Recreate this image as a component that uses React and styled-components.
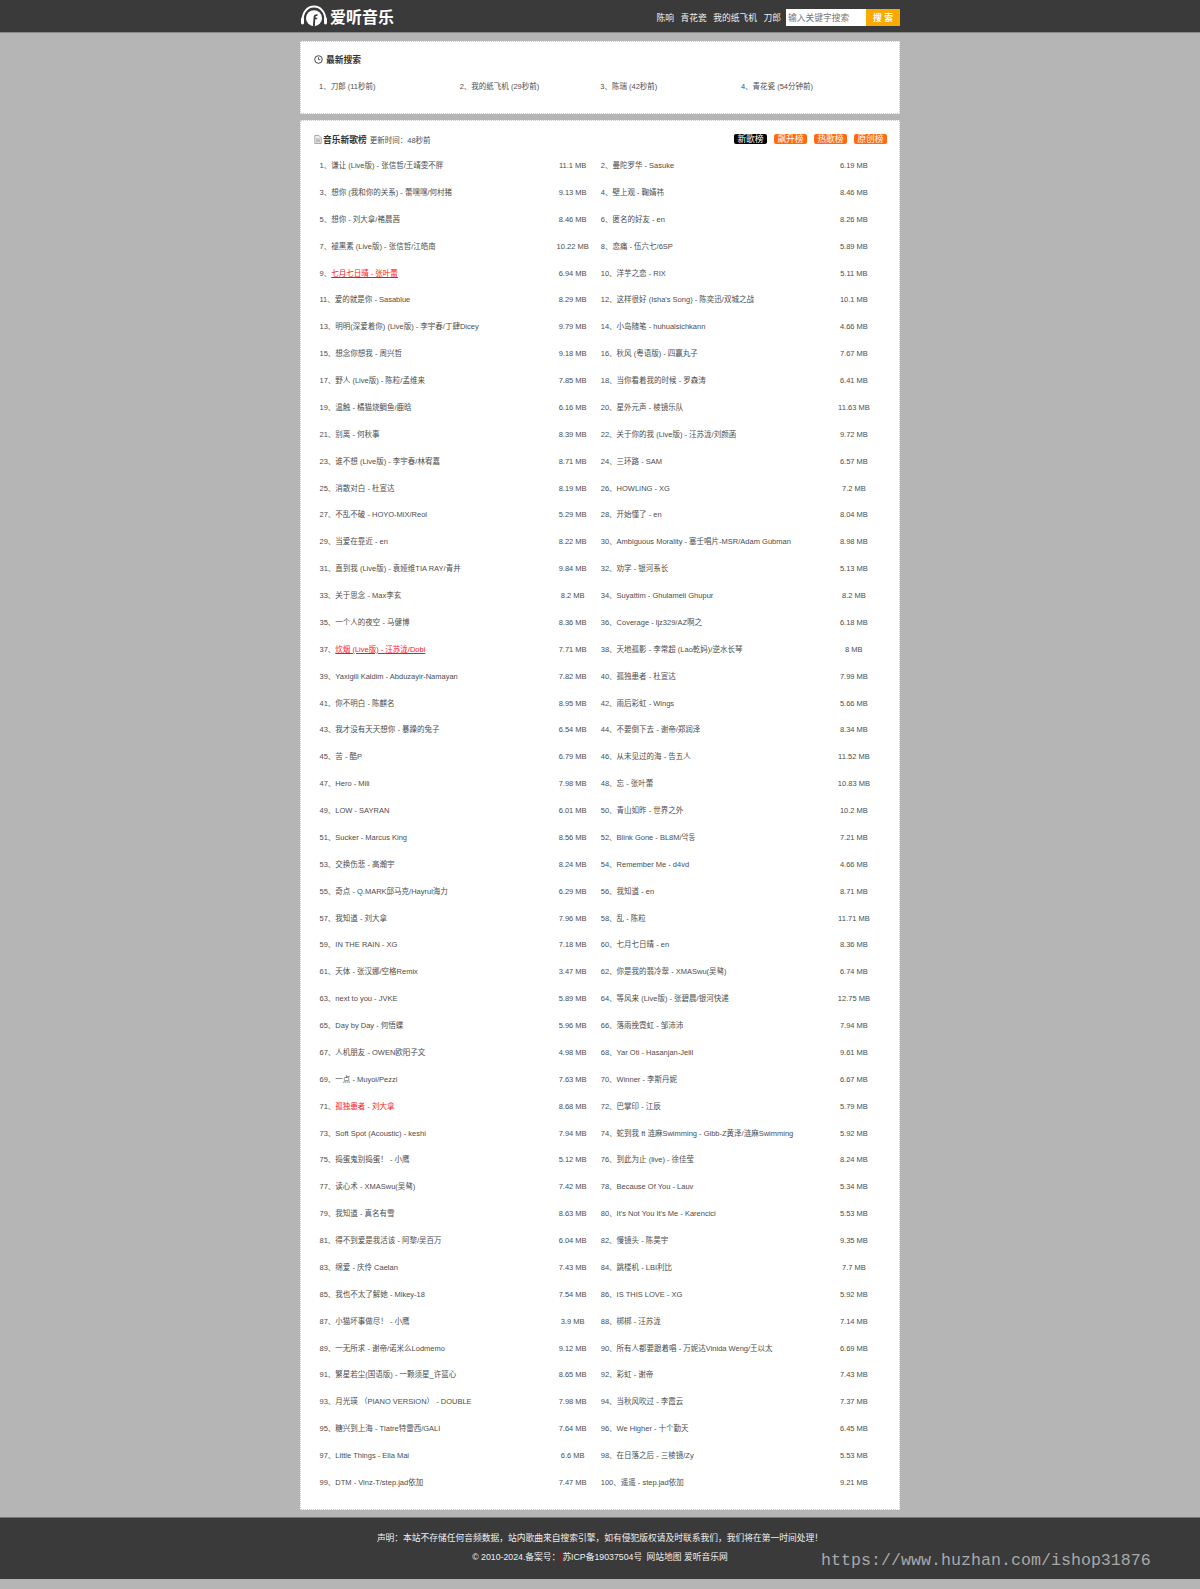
import React from "react";
import styled, { createGlobalStyle } from "styled-components";

const GlobalStyle = createGlobalStyle`
  * {
    box-sizing: border-box;
  }
  body {
    margin: 0;
    background: #b5b5b5;
    font-family: "Liberation Sans", "Noto Sans CJK SC", sans-serif;
    font-size: 7.5px;
    color: #4d4d4d;
  }
  a {
    color: inherit;
    text-decoration: none;
  }
`;

const navLinks = ["陈响", "青花瓷", "我的纸飞机", "刀郎"];

const recent = ["刀郎 (11秒前)", "我的纸飞机 (29秒前)", "陈瑞 (42秒前)", "青花瓷 (54分钟前)"];

const tabs = [
  { label: "新歌榜", active: true },
  { label: "飙升榜" },
  { label: "热歌榜" },
  { label: "原创榜" },
];

// [song, size, highlight] highlight: 1 = red + underline, 2 = red only
const songs = [
  ["谦让 (Live版) - 张信哲/王靖雯不胖", "11.1 MB"],
  ["曼陀罗华 - Sasuke", "6.19 MB"],
  ["想你 (我和你的关系) - 蕾嘿嘿/何村猪", "9.13 MB"],
  ["壁上观 - 鞠婧祎", "8.46 MB"],
  ["想你 - 刘大拿/褚晨茜", "8.46 MB"],
  ["匿名的好友 - en", "8.26 MB"],
  ["褪黑素 (Live版) - 张信哲/江皓南", "10.22 MB"],
  ["恋痛 - 伍六七/6SP", "5.89 MB"],
  ["七月七日晴 - 张叶蕾", "6.94 MB", 1],
  ["洋芋之恋 - RIX", "5.11 MB"],
  ["爱的就是你 - Sasablue", "8.29 MB"],
  ["这样很好 (Isha's Song) - 陈奕迅/双城之战", "10.1 MB"],
  ["明明(深爱着你) (Live版) - 李宇春/丁肆Dicey", "9.79 MB"],
  ["小岛随笔 - huhualsichkann", "4.66 MB"],
  ["想念你想我 - 周兴哲", "9.18 MB"],
  ["秋风 (粤语版) - 四赢丸子", "7.67 MB"],
  ["野人 (Live版) - 陈粒/孟维来", "7.85 MB"],
  ["当你看着我的时候 - 罗森涛", "6.41 MB"],
  ["温触 - 橘猫烧鲷鱼/鹿晗", "6.16 MB"],
  ["星外元声 - 棱镜乐队", "11.63 MB"],
  ["别离 - 何秋事", "8.39 MB"],
  ["关于你的我 (Live版) - 汪苏泷/刘颜菡", "9.72 MB"],
  ["谁不想 (Live版) - 李宇春/林宥嘉", "8.71 MB"],
  ["三环路 - SAM", "6.57 MB"],
  ["消散对白 - 杜宣达", "8.19 MB"],
  ["HOWLING - XG", "7.2 MB"],
  ["不乱不破 - HOYO-MiX/Reol", "5.29 MB"],
  ["开始懂了 - en", "8.04 MB"],
  ["当爱在靠近 - en", "8.22 MB"],
  ["Ambiguous Morality - 塞壬唱片-MSR/Adam Gubman", "8.98 MB"],
  ["直到我 (Live版) - 袁娅维TIA RAY/青井", "9.84 MB"],
  ["劝学 - 银河系长", "5.13 MB"],
  ["关于思念 - Max李玄", "8.2 MB"],
  ["Suyattim - Ghulameli Ghupur", "8.2 MB"],
  ["一个人的夜空 - 马健博", "8.36 MB"],
  ["Coverage - ljz329/AZ啊之", "6.18 MB"],
  ["炊烟 (Live版) - 汪苏泷/Dobi", "7.71 MB", 1],
  ["天地孤影 - 李常超 (Lao乾妈)/逆水长琴", "8 MB"],
  ["Yaxigili Kaldim - Abduzayir-Namayan", "7.82 MB"],
  ["孤独患者 - 杜宣达", "7.99 MB"],
  ["你不明白 - 陈麒名", "8.95 MB"],
  ["雨后彩虹 - Wings", "5.66 MB"],
  ["我才没有天天想你 - 暴躁的兔子", "6.54 MB"],
  ["不要倒下去 - 谢帝/郑润泽", "8.34 MB"],
  ["苦 - 酷P", "6.79 MB"],
  ["从未见过的海 - 告五人", "11.52 MB"],
  ["Hero - Mili", "7.98 MB"],
  ["忘 - 张叶蕾", "10.83 MB"],
  ["LOW - SAYRAN", "6.01 MB"],
  ["青山如昨 - 世界之外", "10.2 MB"],
  ["Sucker - Marcus King", "8.56 MB"],
  ["Blink Gone - BL8M/악동", "7.21 MB"],
  ["交换伤悲 - 高瀚宇", "8.24 MB"],
  ["Remember Me - d4vd", "4.66 MB"],
  ["奇点 - Q.MARK邱马克/Hayrul海力", "6.29 MB"],
  ["我知道 - en", "8.71 MB"],
  ["我知道 - 刘大拿", "7.96 MB"],
  ["乱 - 陈粒", "11.71 MB"],
  ["IN THE RAIN - XG", "7.18 MB"],
  ["七月七日晴 - en", "8.36 MB"],
  ["天体 - 张汉娜/空格Remix", "3.47 MB"],
  ["你是我的翡冷翠 - XMASwu(吴骜)", "6.74 MB"],
  ["next to you - JVKE", "5.89 MB"],
  ["等风来 (Live版) - 张碧晨/银河快递", "12.75 MB"],
  ["Day by Day - 何悟蝶", "5.96 MB"],
  ["落雨挽霓虹 - 邹沛沛", "7.94 MB"],
  ["人机朋友 - OWEN欧阳子文", "4.98 MB"],
  ["Yar Oti - Hasanjan-Jelil", "9.61 MB"],
  ["一点 - Muyoi/Pezzi", "7.63 MB"],
  ["Winner - 李斯丹妮", "6.67 MB"],
  ["孤独患者 - 刘大拿", "8.68 MB", 2],
  ["巴掌印 - 江辰", "5.79 MB"],
  ["Soft Spot (Acoustic) - keshi", "7.94 MB"],
  ["蛇到我 ft 涟麻Swimming - Gibb-Z黄泽/涟麻Swimming", "5.92 MB"],
  ["捣蛋鬼别捣蛋！ - 小鹰", "5.12 MB"],
  ["到此为止 (live) - 徐佳莹", "8.24 MB"],
  ["读心术 - XMASwu(吴骜)", "7.42 MB"],
  ["Because Of You - Lauv", "5.34 MB"],
  ["我知道 - 真名有雪", "8.63 MB"],
  ["It's Not You It's Me - Karencici", "5.53 MB"],
  ["得不到爱是我活该 - 阿黎/吴百万", "6.04 MB"],
  ["慢镜头 - 陈昊宇", "9.35 MB"],
  ["绵爱 - 庆伶 Caelan", "7.43 MB"],
  ["跳楼机 - LBI利比", "7.7 MB"],
  ["我也不太了解她 - Mikey-18", "7.54 MB"],
  ["IS THIS LOVE - XG", "5.92 MB"],
  ["小猫坏事做尽！ - 小鹰", "3.9 MB"],
  ["梆梆 - 汪苏泷", "7.14 MB"],
  ["一无所求 - 谢帝/诺米么Lodmemo", "9.12 MB"],
  ["所有人都要跟着唱 - 万妮达Vinida Weng/王以太", "6.69 MB"],
  ["繁星若尘(国语版) - 一颗须星_许篮心", "8.65 MB"],
  ["彩虹 - 谢帝", "7.43 MB"],
  ["月光瑛 （PIANO VERSION） - DOUBLE", "7.98 MB"],
  ["当秋风吹过 - 李霞云", "7.37 MB"],
  ["糖兴到上海 - Tlatre特雷西/GALI", "7.64 MB"],
  ["We Higher - 十个勤天", "6.45 MB"],
  ["Little Things - Ella Mai", "6.6 MB"],
  ["在日落之后 - 三棱镜/Zy", "5.53 MB"],
  ["DTM - Vinz-T/step.jad依加", "7.47 MB"],
  ["遥遥 - step.jad依加", "9.21 MB"],
];

function Logo() {
  return (
    <LogoLink href="#">
      <svg width="28" height="22" viewBox="0 0 28 22">
        <path d="M2.6 15 C2.6 7 7.5 1.6 14 1.6 C20.5 1.6 25.4 7 25.4 15" fill="none" stroke="#fff" strokeWidth="2" />
        <rect x="1" y="12.5" width="3" height="7" rx="1.4" fill="#fff" />
        <rect x="24" y="12.5" width="3" height="7" rx="1.4" fill="#fff" />
        <circle cx="14" cy="13.2" r="8" fill="#fff" />
        <path d="M12.9 21.5 L13.6 12 C13.8 10 15 9.2 17.6 9.4 L17.4 11 C16 10.9 15.6 11.2 15.5 12 L15.5 12.7 L17.4 12.7 L17.2 14.3 L15.3 14.3 L14.8 21.5 Z" fill="#3a3a3a" />
      </svg>
      <LogoText>爱听音乐</LogoText>
    </LogoLink>
  );
}

function ClockIcon() {
  return (
    <svg width="9" height="9" viewBox="0 0 9 9">
      <circle cx="4.5" cy="4.5" r="3.8" fill="none" stroke="#333" strokeWidth="0.9" />
      <path d="M4.5 2.2 V4.7 H6.4" fill="none" stroke="#333" strokeWidth="0.8" />
    </svg>
  );
}

function FileIcon() {
  return (
    <svg width="8" height="9" viewBox="0 0 8 9">
      <path d="M0.8 0.5 H5 L7.2 2.7 V8.5 H0.8 Z" fill="#eee" stroke="#888" strokeWidth="0.7" />
      <path d="M2 4 H6 M2 5.4 H6 M2 6.8 H6" stroke="#888" strokeWidth="0.6" />
    </svg>
  );
}

export default function App() {
  return (
    <>
      <GlobalStyle />
      <Header>
        <HeaderInner>
          <Logo />
          <HeaderRight>
            <Nav>
              {navLinks.map((link) => (
                <a href="#" key={link}>
                  {link}
                </a>
              ))}
            </Nav>
            <SearchForm>
              <SearchInput placeholder="输入关键字搜索" />
              <SearchButton type="button">搜 索</SearchButton>
            </SearchForm>
          </HeaderRight>
        </HeaderInner>
      </Header>

      <Main>
        <RecentPanel>
          <RecentTitle>
            <ClockIcon />
            <PanelHeading>最新搜索</PanelHeading>
          </RecentTitle>
          <RecentList>
            {recent.map((item, i) => (
              <li key={item}>
                {i + 1}、{item}
              </li>
            ))}
          </RecentList>
        </RecentPanel>

        <ChartPanel>
          <ChartHead>
            <ChartTitle>
              <FileIcon />
              <PanelHeading>音乐新歌榜</PanelHeading>
              <UpdateTime>更新时间：48秒前</UpdateTime>
            </ChartTitle>
            <Tabs>
              {tabs.map((tab) => (
                <Tab href="#" key={tab.label} $active={tab.active}>
                  {tab.label}
                </Tab>
              ))}
            </Tabs>
          </ChartHead>
          <SongList>
            {songs.map(([name, size, mark], i) => (
              <SongRow key={i}>
                <SongName>
                  {i + 1}、
                  <SongLink href="#" $mark={mark}>
                    {name}
                  </SongLink>
                </SongName>
                <SongSize>{size}</SongSize>
              </SongRow>
            ))}
          </SongList>
        </ChartPanel>
      </Main>

      <Footer>
        <FooterLine>声明：本站不存储任何音频数据，站内歌曲来自搜索引擎，如有侵犯版权请及时联系我们，我们将在第一时间处理！</FooterLine>
        <FooterLine>
          © 2010-2024.备案号：<IcpLink href="#">苏ICP备19037504号</IcpLink> <a href="#">网站地图</a> <a href="#">爱听音乐网</a>
        </FooterLine>
        <Watermark>https://www.huzhan.com/ishop31876</Watermark>
      </Footer>
    </>
  );
}

const Header = styled.header`
  height: 33px;
  background: #3a3a3a;
  border-bottom: 1px solid #8a8a8a;
`;

const HeaderInner = styled.div`
  width: 600px;
  height: 32px;
  margin: 0 auto;
  display: flex;
  align-items: center;
  justify-content: space-between;
`;

const LogoLink = styled.a`
  display: flex;
  align-items: center;
  gap: 2px;
`;

const LogoText = styled.span`
  font-size: 16px;
  font-weight: 700;
  color: #fff;
  font-family: "Noto Sans CJK SC", sans-serif;
`;

const HeaderRight = styled.div`
  display: flex;
  align-items: center;
  gap: 5px;
  padding-top: 3px;
`;

const Nav = styled.nav`
  display: flex;
  gap: 6.5px;
  font-size: 8.75px;
  color: #eee;
`;

const SearchForm = styled.form`
  display: flex;
  height: 17px;
  margin: 0;
`;

const SearchInput = styled.input`
  width: 80px;
  height: 17px;
  border: 0;
  outline: none;
  padding: 0 2px;
  background: #fff;
  font-family: inherit;
  font-size: 8.75px;

  ::placeholder {
    color: #888;
  }
`;

const SearchButton = styled.button`
  width: 34px;
  height: 17px;
  border: 0;
  padding: 0;
  background: #f9a900;
  color: #fff;
  font-family: inherit;
  font-size: 8.75px;
  font-weight: 700;
`;

const Main = styled.main`
  width: 600px;
  margin: 0 auto;
  padding-top: 8px;
  display: flex;
  flex-direction: column;
  gap: 6px;
`;

const Panel = styled.section`
  background: #fff;
  border: 1px dotted #ccc;
`;

const RecentPanel = styled(Panel)`
  height: 73px;
  padding: 12px 18px 0 13px;
`;

const RecentTitle = styled.div`
  display: flex;
  align-items: center;
  gap: 3px;
  height: 10px;
`;

const PanelHeading = styled.h3`
  margin: 0;
  font-size: 8.75px;
  font-weight: 700;
  color: #333;
`;

const RecentList = styled.ul`
  list-style: none;
  margin: 18px 0 0 5px;
  padding: 0;
  display: grid;
  grid-template-columns: repeat(4, 140.625px);
  line-height: 10px;
`;

const ChartPanel = styled(Panel)`
  height: 1390px;
  padding: 13px 12px 0 13px;
`;

const ChartHead = styled.div`
  display: flex;
  align-items: center;
  justify-content: space-between;
  height: 10px;
`;

const ChartTitle = styled.div`
  display: flex;
  align-items: center;
  gap: 1px;
`;

const UpdateTime = styled.span`
  margin-left: 2px;
`;

const Tabs = styled.div`
  display: flex;
  gap: 7px;
`;

const Tab = styled.a`
  width: 33px;
  height: 10px;
  line-height: 10px;
  border-radius: 2px;
  text-align: center;
  font-size: 8.75px;
  color: #fff;
  background: ${(p) => (p.$active ? "#000" : "#ff6a13")};
`;

const SongList = styled.ul`
  list-style: none;
  margin: 9px 0 0 5.5px;
  padding: 0;
  display: grid;
  grid-template-columns: repeat(2, 281.25px);
  grid-auto-rows: 26.875px;
`;

const SongRow = styled.li`
  display: flex;
  align-items: baseline;
  line-height: 26.875px;
`;

const SongName = styled.div`
  width: 225px;
  white-space: nowrap;
`;

const SongLink = styled.a`
  color: ${(p) => (p.$mark ? "#f11" : "inherit")};
  text-decoration: ${(p) => (p.$mark === 1 ? "underline" : "none")};
`;

const SongSize = styled.div`
  width: 56.25px;
  text-align: center;
`;

const Footer = styled.footer`
  position: relative;
  height: 62px;
  margin-top: 7px;
  margin-bottom: 10px;
  padding-top: 15px;
  background: #3a3a3a;
  border-top: 1px solid #777;
  color: #eee;
  font-size: 8.75px;
  text-align: center;
`;

const FooterLine = styled.p`
  margin: 0 0 6.5px;
  line-height: 11px;
`;

const IcpLink = styled.a`
  display: inline-block;
  border: 1px solid #7a1f1f;
  line-height: 11px;
  padding: 0 1px;
`;

const Watermark = styled.div`
  position: absolute;
  left: 821px;
  top: 33px;
  font-family: "Liberation Mono", monospace;
  font-size: 16.67px;
  line-height: 20px;
  color: #a8a8a8;
  white-space: nowrap;
`;
